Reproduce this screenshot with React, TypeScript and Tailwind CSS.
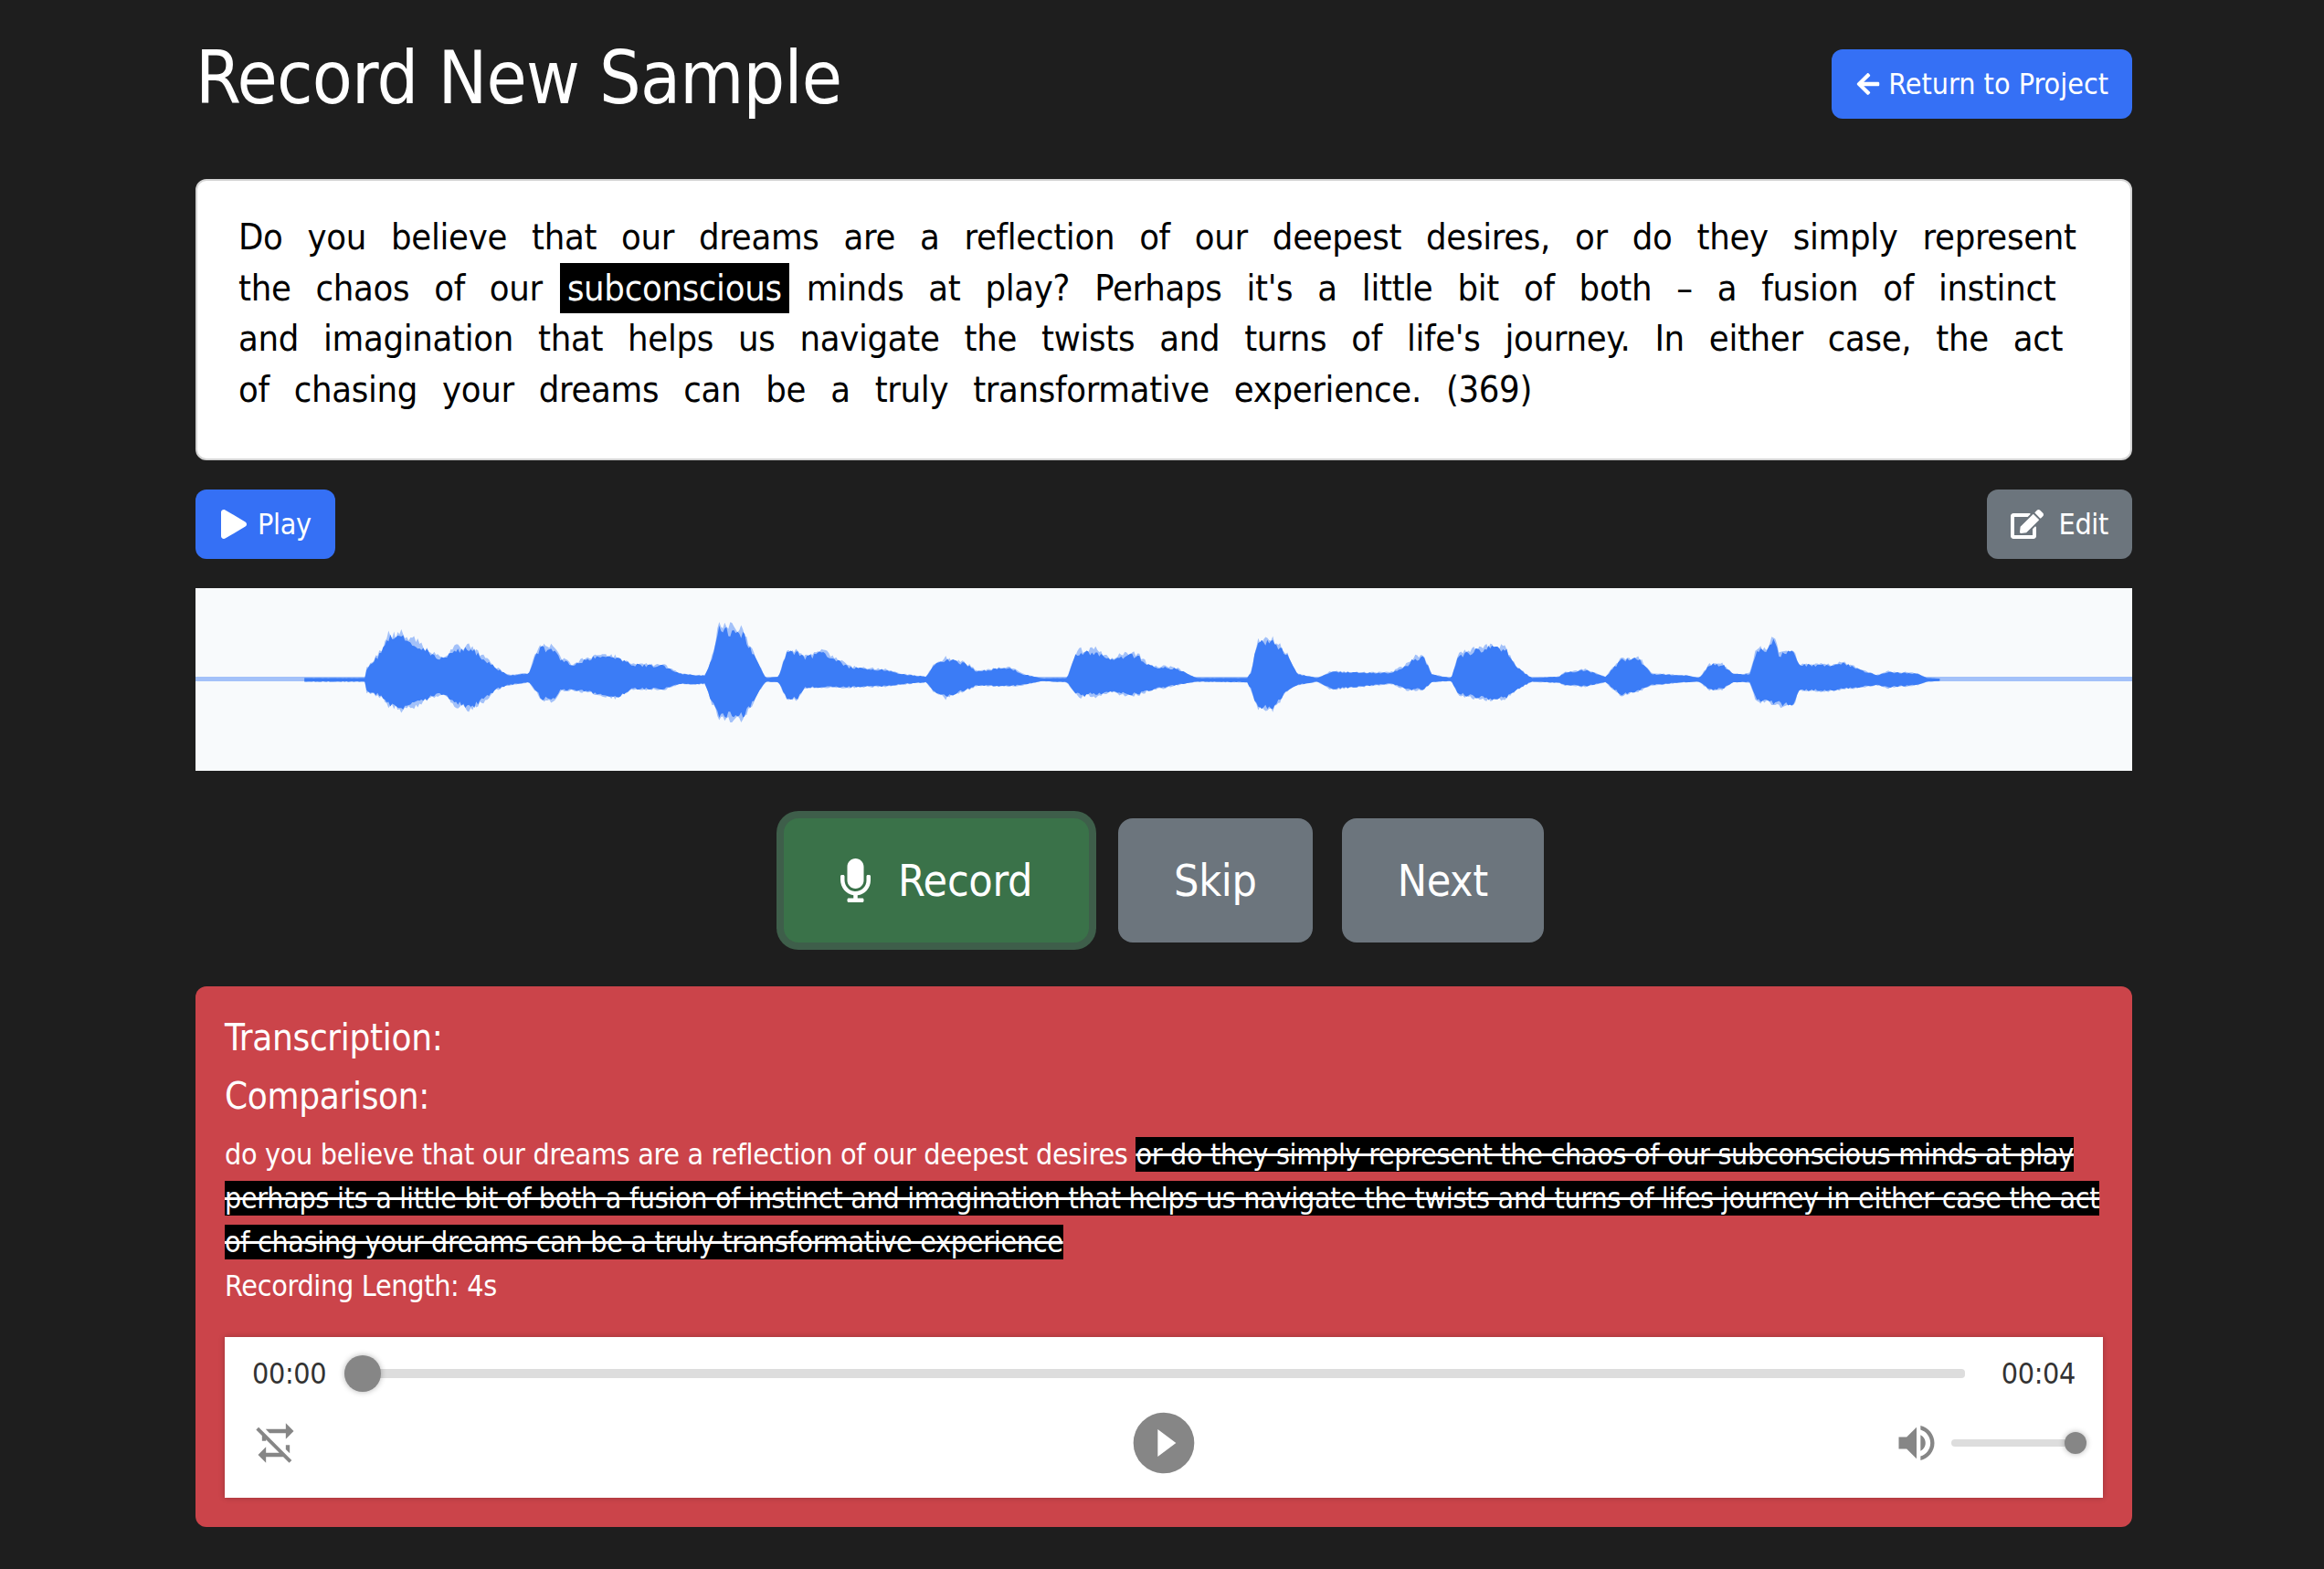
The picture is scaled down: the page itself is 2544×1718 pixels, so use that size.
import { FaArrowLeft, FaEdit, FaMicrophone, FaPlay } from 'react-icons/fa'

const prompt =
  "Do you believe that our dreams are a reflection of our deepest desires, or do they simply represent the chaos of our subconscious minds at play? Perhaps it's a little bit of both – a fusion of instinct and imagination that helps us navigate the twists and turns of life's journey. In either case, the act of chasing your dreams can be a truly transformative experience. (369)"

const envelopeA = [
  [190, 335, 348], [285, 335, 348], [287, 300, 385], [310, 240, 400], [320, 185, 430], [345, 182, 447],
  [370, 215, 425], [390, 250, 400], [410, 262, 395], [425, 228, 430], [450, 225, 445], [470, 262, 415],
  [490, 300, 375], [510, 325, 360], [540, 318, 350], [552, 240, 385], [560, 225, 410], [580, 228, 415],
  [590, 262, 380], [610, 290, 378], [630, 262, 385], [650, 255, 395], [680, 262, 405], [700, 285, 375],
  [750, 290, 375], [780, 320, 355], [800, 325, 358], [815, 325, 355], [825, 270, 420], [835, 155, 470],
  [875, 165, 480], [885, 225, 440], [900, 290, 380], [910, 335, 348], [930, 330, 350], [942, 240, 410],
  [960, 240, 410], [970, 260, 370], [1000, 240, 368], [1040, 295, 368], [1100, 305, 365], [1120, 320, 358],
  [1160, 330, 350], [1175, 280, 390], [1190, 265, 405], [1220, 280, 380], [1240, 310, 362], [1290, 295, 365],
  [1310, 320, 360], [1340, 336, 346], [1380, 335, 350], [1395, 240, 395], [1410, 235, 408],
]
const envelopeB = [
  [-25, 245, 385], [0, 235, 400], [20, 265, 385], [45, 250, 395], [60, 250, 395], [80, 290, 380], [120, 300, 360],
  [150, 335, 348], [225, 335, 350], [232, 310, 380], [240, 205, 440], [265, 200, 445], [285, 250, 380],
  [300, 320, 360], [330, 335, 348], [350, 312, 375], [400, 315, 365], [440, 315, 355], [465, 285, 378],
  [475, 260, 378], [490, 260, 375], [500, 320, 350], [530, 336, 345], [540, 250, 395], [580, 225, 410],
  [610, 220, 412], [625, 290, 380], [650, 335, 348], [690, 330, 352], [700, 315, 360], [730, 305, 365],
  [760, 330, 350], [775, 290, 380], [785, 265, 398], [810, 265, 380], [830, 320, 360], [880, 325, 350],
  [900, 335, 348], [915, 285, 378], [935, 285, 375], [950, 320, 350], [975, 320, 350], [985, 235, 415],
  [1000, 230, 420], [1008, 198, 425], [1015, 198, 430], [1020, 255, 430], [1030, 235, 435], [1042, 235, 435],
  [1048, 285, 380], [1100, 290, 380], [1115, 275, 375], [1135, 300, 370], [1165, 325, 360], [1180, 312, 370],
  [1225, 318, 360], [1240, 335, 348], [1260, 337, 345],
]

const envelope = [
  ...envelopeA.map(([x, t, b]) => [x / 1.4255 - 14, (t - 340) / 3 + 100, (b - 340) / 3 + 100]),
  ...envelopeB.map(([x, t, b]) => [x / 1.3635 + 986, (t - 340) / 3 + 100, (b - 340) / 3 + 100]),
]

// scale < 1 pulls the edge in towards the centre line, for the solid core of the wave
function wavePath(scale: number, seed: number) {
  const top: string[] = []
  const bottom: string[] = []
  let seg = 0
  for (let x = envelope[0][0]; x <= envelope[envelope.length - 1][0]; x += 2) {
    while (envelope[seg + 1][0] < x) seg++
    const [x0, t0, b0] = envelope[seg]
    const [x1, t1, b1] = envelope[seg + 1]
    const k = (x - x0) / (x1 - x0)
    const jitter = Math.abs((Math.sin(x * 12.9898 + seed) * 43758.5453) % 1)
    const up = (100 - (t0 + (t1 - t0) * k)) * scale
    const down = (b0 + (b1 - b0) * k - 100) * scale
    top.push(`${x.toFixed(1)} ${(100 - up * (1 - jitter * 0.2)).toFixed(1)}`)
    bottom.unshift(`${x.toFixed(1)} ${(100 + down * (1 - jitter * 0.2)).toFixed(1)}`)
  }
  return `M${top.join('L')}L${bottom.join('L')}Z`
}

function Waveform() {
  return (
    <div className="mb-[44px] h-[200px] bg-[#f8fafc]">
      <svg viewBox="0 0 2120 200" className="block h-full w-full">
        <rect x="0" y="97" width="2120" height="5" fill="#3b7cf6" opacity="0.45" />
        <path d={wavePath(1.05, 1)} fill="#3b7cf6" opacity="0.45" />
        <path d={wavePath(0.96, 2)} fill="#3b7cf6" />
      </svg>
    </div>
  )
}

function AudioPlayer() {
  return (
    <div className="flex flex-col gap-4 bg-white px-[30px] py-5 text-[#333] shadow-[0_0_6px_rgba(0,0,0,0.25)]">
      <div className="flex h-10 items-center">
        <span className="text-[32px] leading-10">00:00</span>
        <div className="relative mr-10 ml-5 h-2.5 flex-1 rounded-[4px] bg-[#ddd]">
          <span className="absolute top-[-15px] left-0 h-10 w-10 rounded-full bg-[#868686] shadow-[0_0_6px_rgba(0,0,0,0.3)]" />
        </div>
        <span className="text-[32px] leading-10">00:04</span>
      </div>
      <div className="flex h-20 items-center">
        <div className="flex-1">
          <svg viewBox="0 0 24 24" className="h-[52px] w-[52px] fill-[#868686]">
            <path d="M2,5.27L3.28,4L20,20.72L18.73,22L15.73,19H7V22L3,18L7,14V17H13.73L7,10.27V11H5V8.27L2,5.27M17,13H19V17.18L17,15.18V13M17,5V2L21,6L17,10V7H8.82L6.82,5H17Z" />
          </svg>
        </div>
        <svg viewBox="0 0 24 24" className="h-20 w-20 fill-[#868686]">
          <path d="M10,16.5V7.5L16,12M12,2A10,10 0 0,0 2,12A10,10 0 0,0 12,22A10,10 0 0,0 22,12A10,10 0 0,0 12,2Z" />
        </svg>
        <div className="flex flex-1 items-center justify-end gap-3">
          <svg viewBox="0 0 24 24" className="h-[52px] w-[52px] fill-[#868686]">
            <path d="M14,3.23V5.29C16.89,6.15 19,8.83 19,12C19,15.17 16.89,17.84 14,18.7V20.77C18,19.86 21,16.28 21,12C21,7.72 18,4.14 14,3.23M16.5,12C16.5,10.23 15.5,8.71 14,7.97V16C15.5,15.29 16.5,13.76 16.5,12M3,9V15H7L12,20V4L7,9H3Z" />
          </svg>
          <div className="relative h-2 w-[136px] rounded-[4px] bg-[#ddd]">
            <span className="absolute top-[-8px] right-[-12px] h-6 w-6 rounded-full bg-[#868686] shadow-[0_0_6px_rgba(0,0,0,0.3)]" />
          </div>
        </div>
      </div>
    </div>
  )
}

export default function App() {
  return (
    <div className="min-h-[1718px] bg-[#1e1e1e] pt-[38px] pr-[210px] pl-[214px] font-['DejaVu_Sans_Condensed','DejaVu_Sans',sans-serif] text-[32px] leading-[48px] tracking-[-0.01em] text-white">
      <header className="flex h-[158px] items-start justify-between">
        <h1 className="text-[80px] leading-[96px] tracking-[-0.01em]">Record New Sample</h1>
        <button className="mt-4 flex h-[76px] items-center gap-2 rounded-xl bg-[#3570f5] px-[26px] tracking-normal">
          <FaArrowLeft className="h-7 w-7" />
          Return to Project
        </button>
      </header>

      <div className="mb-8 rounded-xl border-2 border-[#d4d4d4] bg-white px-[37px] pt-[34px] pb-[48px] text-[39.6px] leading-[55.5px] text-black">
        {prompt.split(' ').map((word, i) => (
          <span key={i}>
            <span className={word === 'subconscious' ? 'inline-block bg-black px-2 text-white' : 'inline-block px-2'}>
              {word}
            </span>{' '}
          </span>
        ))}
      </div>

      <div className="mb-8 flex justify-between">
        <button className="flex h-[76px] items-center gap-2.5 rounded-xl bg-[#3570f5] px-[26px]">
          <FaPlay className="h-8 w-8" />
          Play
        </button>
        <button className="flex h-[76px] items-center gap-[17px] rounded-xl bg-[#6c757d] px-[26px]">
          <FaEdit className="h-9 w-9" />
          Edit
        </button>
      </div>

      <Waveform />

      <div className="mb-12 flex justify-center gap-8 pt-2 text-[48px] leading-[72px]">
        <button className="flex h-[136px] items-center gap-[30px] rounded-2xl bg-[#3a7249] px-[62px] ring-8 ring-[#3e5e4a]">
          <FaMicrophone className="h-12 w-[33px]" />
          Record
        </button>
        <button className="h-[136px] rounded-2xl bg-[#6c757d] px-[61px]">Skip</button>
        <button className="h-[136px] rounded-2xl bg-[#6c757d] px-[61px]">Next</button>
      </div>

      <section className="rounded-xl bg-[#cb444a] p-8">
        <h5 className="mb-4 text-[40px] leading-[48px]">Transcription:</h5>
        <h5 className="mb-4 text-[40px] leading-[48px]">Comparison:</h5>
        <p>
          do you believe that our dreams are a reflection of our deepest desires{' '}
          <del className="bg-black">
            or do they simply represent the chaos of our subconscious minds at play perhaps its a little bit of both a
            fusion of instinct and imagination that helps us navigate the twists and turns of lifes journey in either
            case the act of chasing your dreams can be a truly transformative experience
          </del>
        </p>
        <p className="mb-8">Recording Length: 4s</p>
        <AudioPlayer />
      </section>
    </div>
  )
}
